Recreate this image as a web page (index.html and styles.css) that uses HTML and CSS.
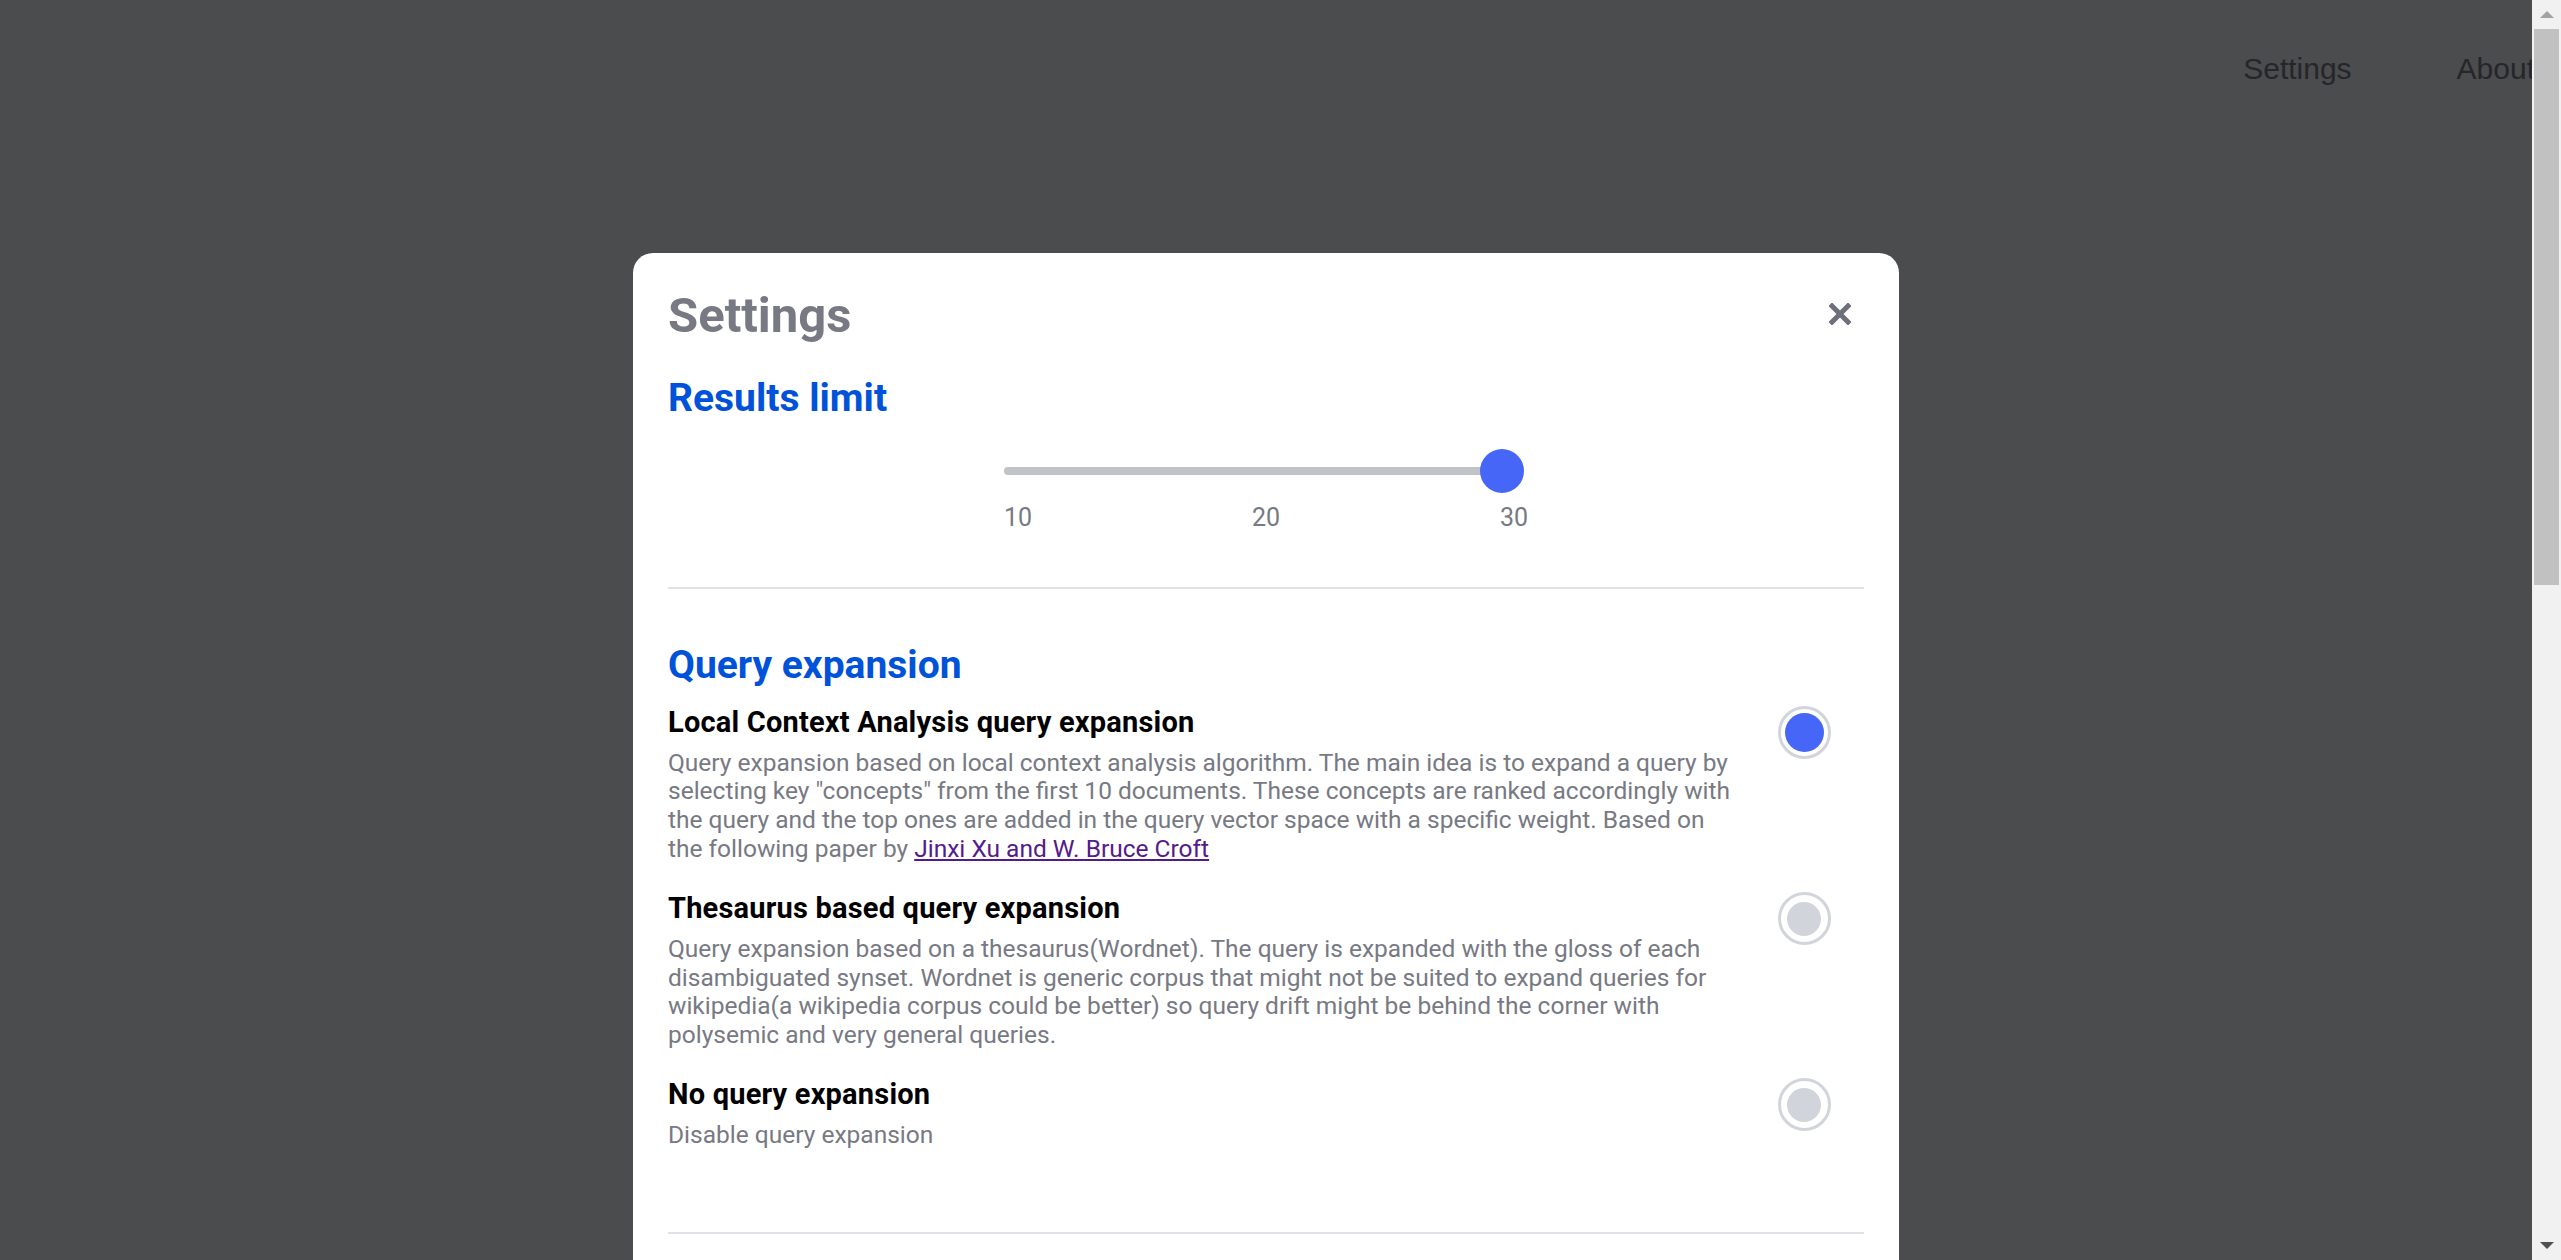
FILE: index.html
```html
<!DOCTYPE html>
<html lang="en">
<head>
<meta charset="utf-8">
<title>Settings</title>
<link rel="stylesheet" href="styles.css">
</head>
<body>
<div class="app">
  <div class="viewport">
    <nav class="topnav">
      <span class="nav-item">Settings</span>
      <span class="nav-item">About</span>
    </nav>
    <div class="modal">
      <div class="modal-header">
        <h2 class="modal-title">Settings</h2>
        <button class="close-btn" aria-label="Close">
          <svg width="22" height="22" viewBox="0 0 22 22"><path d="M3 3 L19 19 M19 3 L3 19" stroke="#6d6f79" stroke-width="5" stroke-linecap="square"/></svg>
        </button>
      </div>

      <h3 class="section-title first">Results limit</h3>
      <div class="slider-wrap">
        <div class="slider">
          <div class="track"></div>
          <div class="thumb"></div>
        </div>
        <div class="ticks">
          <span>10</span>
          <span>20</span>
          <span>30</span>
        </div>
      </div>

      <div class="divider"></div>

      <h3 class="section-title second">Query expansion</h3>
      <div class="options">
        <div class="option">
          <div class="option-text">
            <div class="option-title">Local Context Analysis query expansion</div>
            <p class="option-desc">Query expansion based on local context analysis algorithm. The main idea is to expand a query by selecting key "concepts" from the first 10 documents. These concepts are ranked accordingly with the query and the top ones are added in the query vector space with a specific weight. Based on the following paper by <a href="#" class="paper-link">Jinxi Xu and W. Bruce Croft</a></p>
          </div>
          <div class="option-radio"><span class="radio checked"><span class="dot"></span></span></div>
        </div>
        <div class="option">
          <div class="option-text">
            <div class="option-title">Thesaurus based query expansion</div>
            <p class="option-desc">Query expansion based on a thesaurus(Wordnet). The query is expanded with the gloss of each disambiguated synset. Wordnet is generic corpus that might not be suited to expand queries for wikipedia(a wikipedia corpus could be better) so query drift might be behind the corner with polysemic and very general queries.</p>
          </div>
          <div class="option-radio"><span class="radio"><span class="dot"></span></span></div>
        </div>
        <div class="option">
          <div class="option-text">
            <div class="option-title">No query expansion</div>
            <p class="option-desc">Disable query expansion</p>
          </div>
          <div class="option-radio"><span class="radio"><span class="dot"></span></span></div>
        </div>
      </div>

      <div class="divider bottom"></div>
    </div>
  </div>
  <div class="scrollbar">
    <div class="sb-btn"><span class="arrow-up"></span></div>
    <div class="sb-track"><div class="sb-thumb"></div></div>
    <div class="sb-btn"><span class="arrow-down"></span></div>
  </div>
</div>
</body>
</html>
```
FILE: styles.css
```css
html, body {
  margin: 0;
  padding: 0;
  height: 100%;
  overflow: hidden;
}

body {
  font-family: Roboto, "Noto Sans", "Liberation Sans", sans-serif;
}

.app {
  display: flex;
  width: 100%;
  height: 1260px;
}

.viewport {
  flex: 1;
  height: 1260px;
  overflow: hidden;
  background: #4b4c4e;
}

.topnav {
  display: flex;
  justify-content: flex-end;
  gap: 105px;
  padding-top: 52px;
  margin-right: -3px;
  font-family: "Liberation Sans", Arial, sans-serif;
  font-size: 30px;
  line-height: 34px;
  color: #25262a;
}

.modal {
  width: 50%;
  box-sizing: border-box;
  margin: 167px auto 0;
  padding: 35px 35px 0;
  background: #ffffff;
  border-radius: 20px 20px 0 0;
  height: 1200px;
}

.modal-header {
  display: flex;
  justify-content: space-between;
  align-items: flex-start;
}

.modal-title {
  margin: 0;
  font-size: 49px;
  line-height: 56px;
  font-weight: 700;
  color: #777983;
}

.close-btn {
  border: 0;
  background: none;
  padding: 0;
  margin: 15px 13px 0 0;
  width: 22px;
  height: 22px;
  cursor: pointer;
}

.close-btn svg {
  display: block;
}

.section-title {
  margin: 0;
  font-size: 39px;
  line-height: 46px;
  font-weight: 700;
  color: #0052d9;
}

.section-title.first {
  margin-top: 31px;
}

.section-title.second {
  margin-top: 53px;
}

.slider-wrap {
  width: 524px;
  margin: 28px auto 0;
}

.slider {
  display: flex;
  align-items: center;
  width: 520px;
  height: 44px;
}

.track {
  flex: 1;
  height: 8px;
  border-radius: 4px;
  background: #c0c4c8;
  margin-right: -22px;
}

.thumb {
  width: 44px;
  height: 44px;
  border-radius: 50%;
  background: #4566f6;
  flex: none;
  position: relative;
}

.ticks {
  display: flex;
  justify-content: space-between;
  margin-top: 10px;
  font-size: 25px;
  line-height: 30px;
  color: #777983;
}

.divider {
  height: 2px;
  background: #dfe2e6;
  margin-top: 54px;
}

.divider.bottom {
  margin-top: 82px;
}

.options {
  margin-top: 17px;
  display: flex;
  flex-direction: column;
  gap: 27px;
}

.option {
  display: flex;
  align-items: flex-start;
}

.option-text {
  flex: 1;
  padding-right: 10px;
}

.option-title {
  font-size: 29px;
  line-height: 34px;
  font-weight: 700;
  letter-spacing: 0.2px;
  color: #000000;
}

.option-desc {
  margin: 9.5px 0 0;
  font-size: 24.5px;
  line-height: 28.9px;
  color: #777983;
}

.paper-link {
  color: #551a8b;
  text-decoration: underline;
}

.option-radio {
  width: 120px;
  flex: none;
  display: flex;
  justify-content: center;
  padding-top: 1px;
}

.radio {
  width: 53px;
  height: 53px;
  box-sizing: border-box;
  border: 3px solid #d1d5db;
  border-radius: 50%;
  display: flex;
  align-items: center;
  justify-content: center;
  background: #ffffff;
}

.radio .dot {
  width: 34px;
  height: 34px;
  border-radius: 50%;
  background: #d1d5db;
}

.radio.checked .dot {
  width: 39px;
  height: 39px;
  background: #4566f6;
}

.scrollbar {
  width: 29px;
  flex: none;
  height: 1260px;
  background: #f1f1f1;
  display: flex;
  flex-direction: column;
}

.sb-btn {
  height: 29px;
  display: flex;
  align-items: center;
  justify-content: center;
  flex: none;
}

.arrow-up {
  width: 0;
  height: 0;
  border-left: 7px solid transparent;
  border-right: 7px solid transparent;
  border-bottom: 7px solid #a3a3a3;
}

.arrow-down {
  width: 0;
  height: 0;
  border-left: 7px solid transparent;
  border-right: 7px solid transparent;
  border-top: 7px solid #505050;
}

.sb-track {
  flex: 1;
  padding: 0 2px;
}

.sb-thumb {
  height: 556px;
  background: #c1c1c1;
}
```
